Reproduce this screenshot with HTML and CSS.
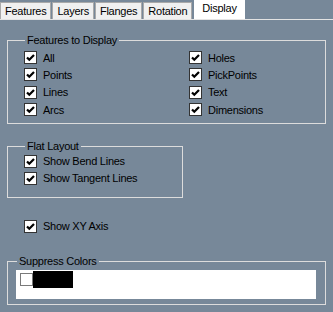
FILE: index.html
```html
<!DOCTYPE html>
<html>

<head>
  <title>Display</title>
  <link rel="stylesheet" href="styles.css">
</head>

<body>
  <div class="tabs">
    <div class="tab">Features</div>
    <div class="tab">Layers</div>
    <div class="tab">Flanges</div>
    <div class="tab">Rotation</div>
    <div class="tab active">Display</div>
  </div>

  <div class="panel">
    <fieldset class="group features">
      <legend>Features to Display</legend>
      <div class="grid">
        <label class="check"><span class="box on"></span>All</label>
        <label class="check"><span class="box on"></span>Holes</label>
        <label class="check"><span class="box on"></span>Points</label>
        <label class="check"><span class="box on"></span>PickPoints</label>
        <label class="check"><span class="box on"></span>Lines</label>
        <label class="check"><span class="box on"></span>Text</label>
        <label class="check"><span class="box on"></span>Arcs</label>
        <label class="check"><span class="box on"></span>Dimensions</label>
      </div>
    </fieldset>

    <fieldset class="group flat">
      <legend>Flat Layout</legend>
      <label class="check"><span class="box on"></span>Show Bend Lines</label>
      <label class="check"><span class="box on"></span>Show Tangent Lines</label>
    </fieldset>

    <label class="check xy"><span class="box on"></span>Show XY Axis</label>

    <fieldset class="group suppress">
      <legend>Suppress Colors</legend>
      <div class="list">
        <span class="box plain"></span>
        <span class="swatch"></span>
      </div>
    </fieldset>
  </div>
</body>

</html>
```

FILE: styles.css
```css
html,
body {
  margin: 0;
  padding: 0;
  height: 100%;
  overflow: hidden;
}

body {
  background-color: #778899;
  font-family: "Liberation Sans", Arial, sans-serif;
  font-size: 11px;
  letter-spacing: -0.25px;
  color: #000;
}

/* tab strip */
.tabs {
  display: flex;
  align-items: flex-end;
  height: 19px;
}

.tab {
  height: 17px;
  line-height: 16px;
  padding: 0 4px;
  margin-right: 1px;
  background-color: #f0f0f0;
  border: 1px solid #a9a9a9;
  border-bottom: none;
  box-sizing: border-box;
}

.tab.active {
  height: 19px;
  line-height: 15px;
  padding: 0 7px;
  margin-left: 1px;
  background-color: #fff;
  border-color: #fff;
}

/* page body */
.panel {
  border-top: 1px solid #e3e3e3;
  padding: 14px 7px 0 7px;
}

.group {
  margin: 0;
  border: 1px solid #dcdcdc;
  padding: 2px 0 4px 16px;
}

.group legend {
  padding: 0 2px;
  margin-left: 1px;
  line-height: 13px;
}

.grid {
  display: grid;
  grid-template-columns: 165px 1fr;
  grid-auto-rows: 17.4px;
}

.check {
  display: flex;
  align-items: center;
  gap: 6px;
  height: 17px;
}

.box {
  width: 13px;
  height: 13px;
  box-sizing: border-box;
  border: 1px solid #333;
  background-color: #fff;
  flex: none;
}

.box.on {
  background: #fff url("data:image/svg+xml,%3Csvg xmlns='http://www.w3.org/2000/svg' width='11' height='11'%3E%3Cpath d='M2 5.5 L4.3 7.8 L9 3' fill='none' stroke='%23000' stroke-width='2.2'/%3E%3C/svg%3E") no-repeat center;
}

.flat {
  width: 176px;
  box-sizing: border-box;
  margin-top: 16px;
  padding-top: 0;
  padding-bottom: 10px;
}

.xy {
  margin: 20px 0 0 17px;
}

.suppress {
  margin-top: 20px;
  padding: 2px 9px 5px 8px;
}

.list {
  display: flex;
  align-items: flex-start;
  height: 28px;
  padding: 1px 4px 0;
  background-color: #fff;
}

.box.plain {
  margin-top: 2px;
  border-color: #7a7a7a;
}

.swatch {
  width: 40px;
  height: 17px;
  background-color: #000;
}
```
